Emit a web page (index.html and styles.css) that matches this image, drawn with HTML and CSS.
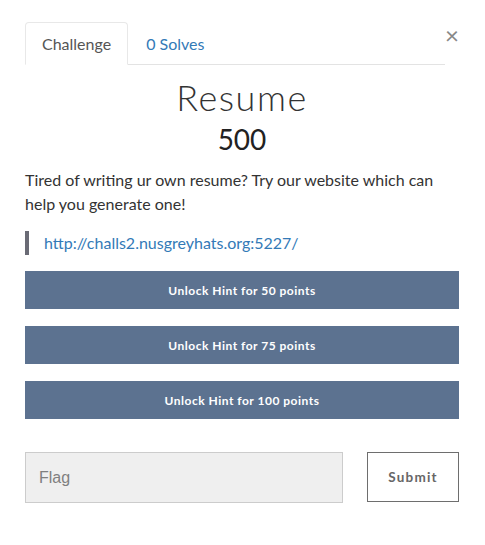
FILE: index.html
```html
<!DOCTYPE html>
<html>
<head>
<meta charset="utf-8">
<link rel="stylesheet" href="styles.css">
</head>
<body>
<div class="modal">
  <button class="close" aria-label="Close">&times;</button>
  <ul class="tabs">
    <li class="tab active">Challenge</li>
    <li class="tab">0 Solves</li>
  </ul>
  <h1 class="title">Resume</h1>
  <h2 class="value">500</h2>
  <p class="desc">Tired of writing ur own resume? Try our website which can help you generate one!</p>
  <blockquote class="quote"><a href="#">http://challs2.nusgreyhats.org:5227/</a></blockquote>
  <div class="hints">
    <button class="hint">Unlock Hint for 50 points</button>
    <button class="hint">Unlock Hint for 75 points</button>
    <button class="hint">Unlock Hint for 100 points</button>
  </div>
  <div class="submit-row">
    <input class="flag" type="text" placeholder="Flag">
    <button class="submit">Submit</button>
  </div>
</div>
</body>
</html>
```
FILE: styles.css
```css
* { box-sizing: border-box; }
body {
  margin: 0;
  background: #fff;
  font-family: Lato, "Liberation Sans", sans-serif;
  color: #333;
}
.modal {
  position: relative;
  width: 485px;
  padding: 22px 26px 0 25px;
}
.close {
  position: absolute;
  top: 22px;
  right: 26px;
  border: 0;
  background: none;
  padding: 0;
  font-family: Lato, sans-serif;
  font-size: 24px;
  line-height: 26px;
  color: #888;
}
.tabs {
  list-style: none;
  margin: 0;
  padding: 0;
  display: flex;
  width: 420px;
  border-bottom: 1px solid #e3e3e3;
}
.tab {
  font-size: 16px;
  line-height: 20px;
  padding: 11px 16px 10px 16px;
  margin-right: 1px;
  margin-bottom: -1px;
  color: #337ab7;
  border: 1px solid transparent;
  border-radius: 4px 4px 0 0;
}
.tab.active {
  color: #555;
  border-color: #e8e8e8;
  border-bottom-color: #fff;
  background: #fff;
}
.title {
  margin: 10px 0 0;
  text-align: center;
  font-weight: 300;
  font-size: 36px;
  line-height: 44px;
  letter-spacing: 1.5px;
  color: #333;
}
.value {
  margin: 3px 0 0;
  text-align: center;
  font-weight: 400;
  font-size: 28px;
  line-height: 34px;
  color: #222;
}
.desc {
  margin: 12px 0 0;
  font-size: 16px;
  line-height: 24px;
  color: #333;
}
.quote {
  margin: 15px 0 0;
  padding: 0 0 0 15px;
  border-left: 4px solid #6a6b75;
  font-size: 16px;
  line-height: 24px;
}
.quote a {
  color: #337ab7;
  text-decoration: none;
}
.hints {
  margin-top: 16px;
  display: flex;
  flex-direction: column;
  gap: 17px;
}
.hint {
  height: 38px;
  border: 0;
  background: #5c7290;
  color: #fff;
  font-family: Lato, sans-serif;
  font-weight: 700;
  font-size: 12px;
  letter-spacing: 0.5px;
}
.submit-row {
  margin-top: 33px;
  display: flex;
  justify-content: space-between;
}
.flag {
  width: 318px;
  height: 51px;
  border: 1px solid #cccccc;
  background: #efefef;
  padding: 0 13px;
  font-family: "Liberation Sans", Arial, sans-serif;
  font-size: 16px;
  color: #555;
}
.flag::placeholder { color: #7f7f7f; }
.submit {
  width: 92px;
  height: 50px;
  border: 1px solid #6e6e6e;
  background: #fff;
  color: #666;
  font-family: Lato, sans-serif;
  font-weight: 700;
  font-size: 13.5px;
  letter-spacing: 1.2px;
}
```
